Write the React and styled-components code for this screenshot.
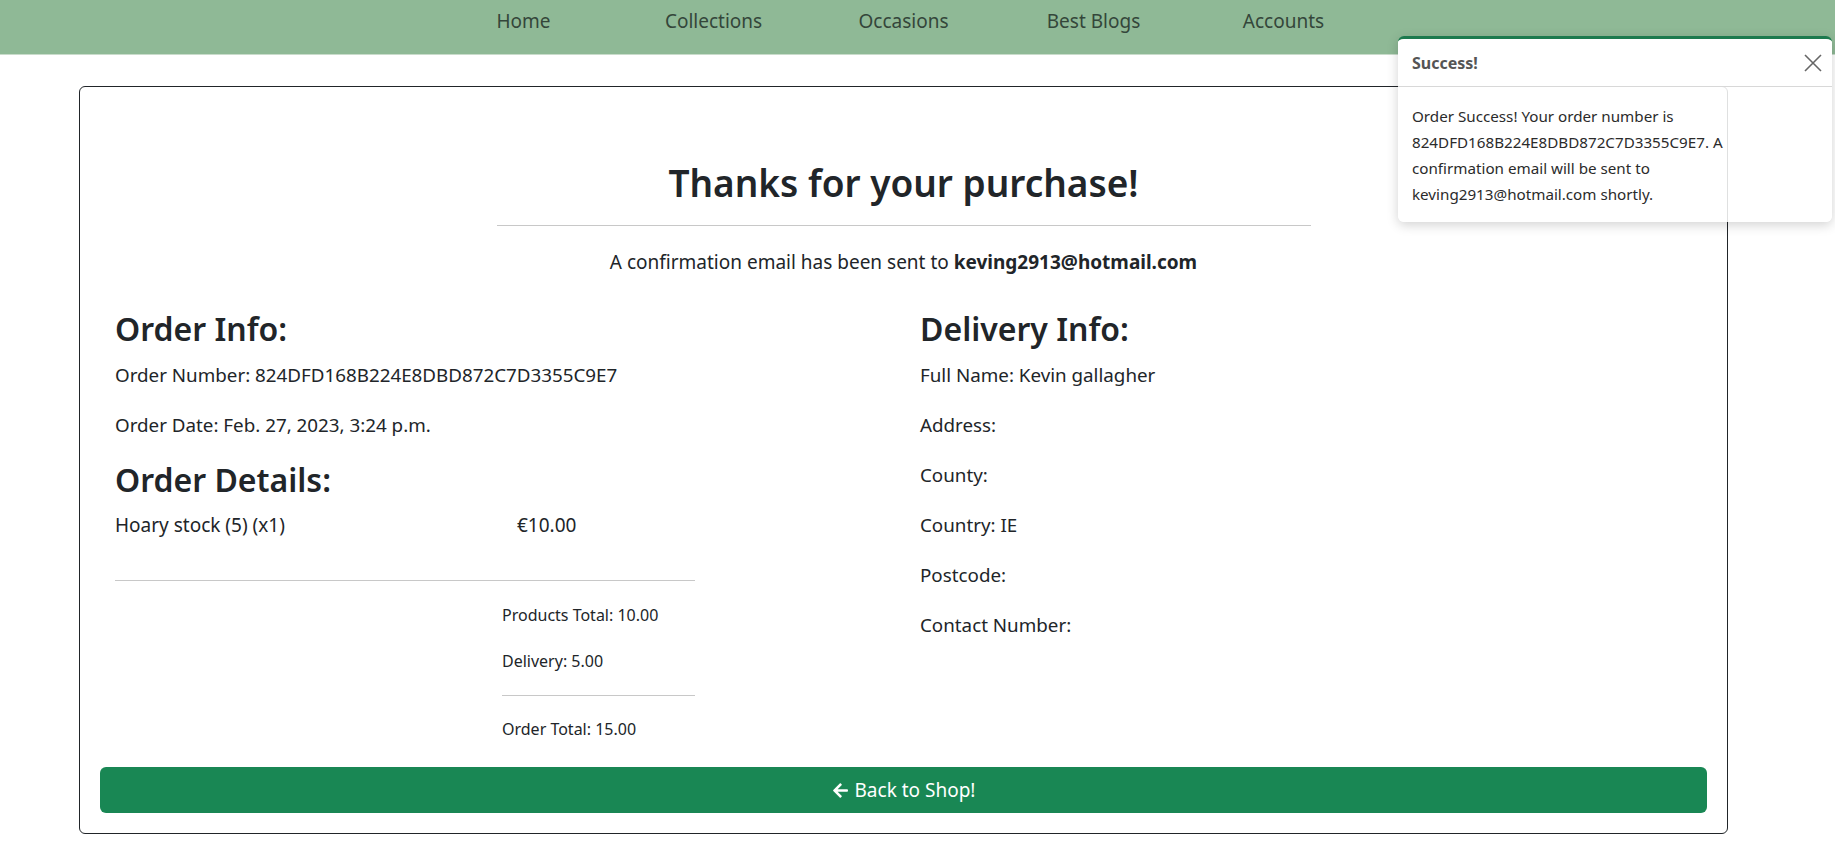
import React from "react";
import styled, { createGlobalStyle } from "styled-components";
import { FaArrowLeft } from "react-icons/fa";

const Global = createGlobalStyle`
  html, body { margin: 0; padding: 0; background: #fff; }
  body {
    font-family: "Noto Sans", "Open Sans", sans-serif;
    color: #212529;
    font-size: 19px;
    line-height: 1.5;
  }
  * { box-sizing: border-box; }
`;

const Page = styled.div`
  position: relative;
  width: 1835px;
  min-height: 851px;
`;

const NavBar = styled.nav`
  height: 55px;
  background: #8fb996;
  border-bottom: 1px solid #c9dccb;
`;

const NavList = styled.ul`
  list-style: none;
  margin: 0 0 0 79px;
  padding: 0;
  width: 1649px;
  height: 100%;
  display: flex;
  justify-content: center;
  align-items: flex-start;
`;

const NavItem = styled.li`
  width: 190px;
  text-align: center;
  padding-top: 7px;
  font-size: 19px;
  color: #34463a;
`;

const Card = styled.main`
  margin: 31px 0 0 79px;
  width: 1649px;
  border: 1.5px solid #212529;
  border-radius: 6px;
  padding: 73px 20px 20px 20px;
`;

const Content = styled.div`
  padding: 0 15px;
`;

const Title = styled.h1`
  margin: 0;
  text-align: center;
  font-size: 37px;
  font-weight: 600;
  line-height: 46px;
`;

const Rule = styled.hr`
  border: 0;
  border-top: 1px solid #c8c8c8;
  margin: ${(p) => p.$m || "16px 0"};
  width: ${(p) => p.$w || "100%"};
`;

const Lead = styled.p`
  margin: 0;
  text-align: center;
  font-size: 19px;
  line-height: 28px;
  b { font-weight: 700; }
`;

const Columns = styled.div`
  display: grid;
  grid-template-columns: 805px 1fr;
  margin-top: 33px;
`;

const Col = styled.section`
  display: flex;
  flex-direction: column;
`;

const SectionTitle = styled.h2`
  margin: 0 0 11px 0;
  font-size: 32px;
  font-weight: 600;
  line-height: 40px;
`;

const Line = styled.p`
  margin: 0 0 20px 0;
  font-size: 18.8px;
  line-height: 30px;
`;

const Details = styled.div`
  width: 580px;
`;

const ItemRow = styled.div`
  display: grid;
  grid-template-columns: 402px 1fr;
  font-size: 19px;
  line-height: 30px;
  margin-top: -1px;
`;

const Totals = styled.div`
  margin-left: 387px;
`;

const SmallLine = styled.p`
  margin: 0;
  font-size: 16px;
  line-height: 24px;
  padding: ${(p) => p.$pad || "0"};
`;

const BackButton = styled.button`
  display: flex;
  align-items: center;
  justify-content: center;
  gap: 6px;
  width: 100%;
  height: 46px;
  margin-top: 26px;
  border: 0;
  border-radius: 6px;
  background: #198754;
  color: #fff;
  font-family: inherit;
  font-size: 19px;
  cursor: pointer;
  svg { font-size: 17px; }
`;

const Toast = styled.div`
  position: absolute;
  top: 36px;
  left: 1398px;
  width: 434px;
  border-top: 3px solid #1d7a4e;
  border-radius: 6px;
  box-shadow: 0 3px 12px rgba(0, 0, 0, 0.18);
  overflow: hidden;
`;

const ToastHeader = styled.div`
  height: 48px;
  display: flex;
  align-items: center;
  justify-content: space-between;
  padding: 0 4px 0 14px;
  background: #fff;
  border-bottom: 1px solid #d8d8d8;
  color: #555;
  font-size: 16px;
  font-weight: 700;
`;

const CloseBtn = styled.button`
  border: 0;
  background: transparent;
  padding: 4px;
  display: flex;
  cursor: pointer;
`;

const ToastBody = styled.div`
  background: rgba(255, 255, 255, 0.86);
  padding: 16px 14px 15px 14px;
  font-size: 15.2px;
  line-height: 26px;
  color: #2b2b2b;
`;

export default function App() {
  return (
    <>
      <Global />
      <Page>
        <NavBar>
          <NavList>
            {["Home", "Collections", "Occasions", "Best Blogs", "Accounts"].map((n) => (
              <NavItem key={n}>{n}</NavItem>
            ))}
          </NavList>
        </NavBar>

        <Card>
          <Content>
            <Title>Thanks for your purchase!</Title>
            <Rule $w="814px" $m="19px auto 22px auto" />
            <Lead>
              A confirmation email has been sent to <b>keving2913@hotmail.com</b>
            </Lead>

            <Columns>
              <Col>
                <SectionTitle>Order Info:</SectionTitle>
                <Line>Order Number: 824DFD168B224E8DBD872C7D3355C9E7</Line>
                <Line>Order Date: Feb. 27, 2023, 3:24 p.m.</Line>
                <SectionTitle>Order Details:</SectionTitle>
                <Details>
                  <ItemRow>
                    <span>Hoary stock (5) (x1)</span>
                    <span>€10.00</span>
                  </ItemRow>
                  <Rule $m="40px 0 22px 0" />
                  <Totals>
                    <SmallLine>Products Total: 10.00</SmallLine>
                    <SmallLine $pad="22px 0 0 0">Delivery: 5.00</SmallLine>
                    <Rule $m="22px 0 21px 0" />
                    <SmallLine>Order Total: 15.00</SmallLine>
                  </Totals>
                </Details>
              </Col>
              <Col>
                <SectionTitle>Delivery Info:</SectionTitle>
                <Line>Full Name: Kevin gallagher</Line>
                <Line>Address: </Line>
                <Line>County: </Line>
                <Line>Country: IE</Line>
                <Line>Postcode: </Line>
                <Line>Contact Number: </Line>
              </Col>
            </Columns>
          </Content>

          <BackButton>
            <FaArrowLeft />
            Back to Shop!
          </BackButton>
        </Card>

        <Toast>
          <ToastHeader>
            <span>Success!</span>
            <CloseBtn aria-label="Close">
              <svg width="22" height="22" viewBox="0 0 22 22">
                <path d="M3 3 L19 19 M19 3 L3 19" stroke="#666" strokeWidth="1.6" fill="none" />
              </svg>
            </CloseBtn>
          </ToastHeader>
          <ToastBody>
            Order Success! Your order number is 824DFD168B224E8DBD872C7D3355C9E7. A
            confirmation email will be sent to keving2913@hotmail.com shortly.
          </ToastBody>
        </Toast>
      </Page>
    </>
  );
}
